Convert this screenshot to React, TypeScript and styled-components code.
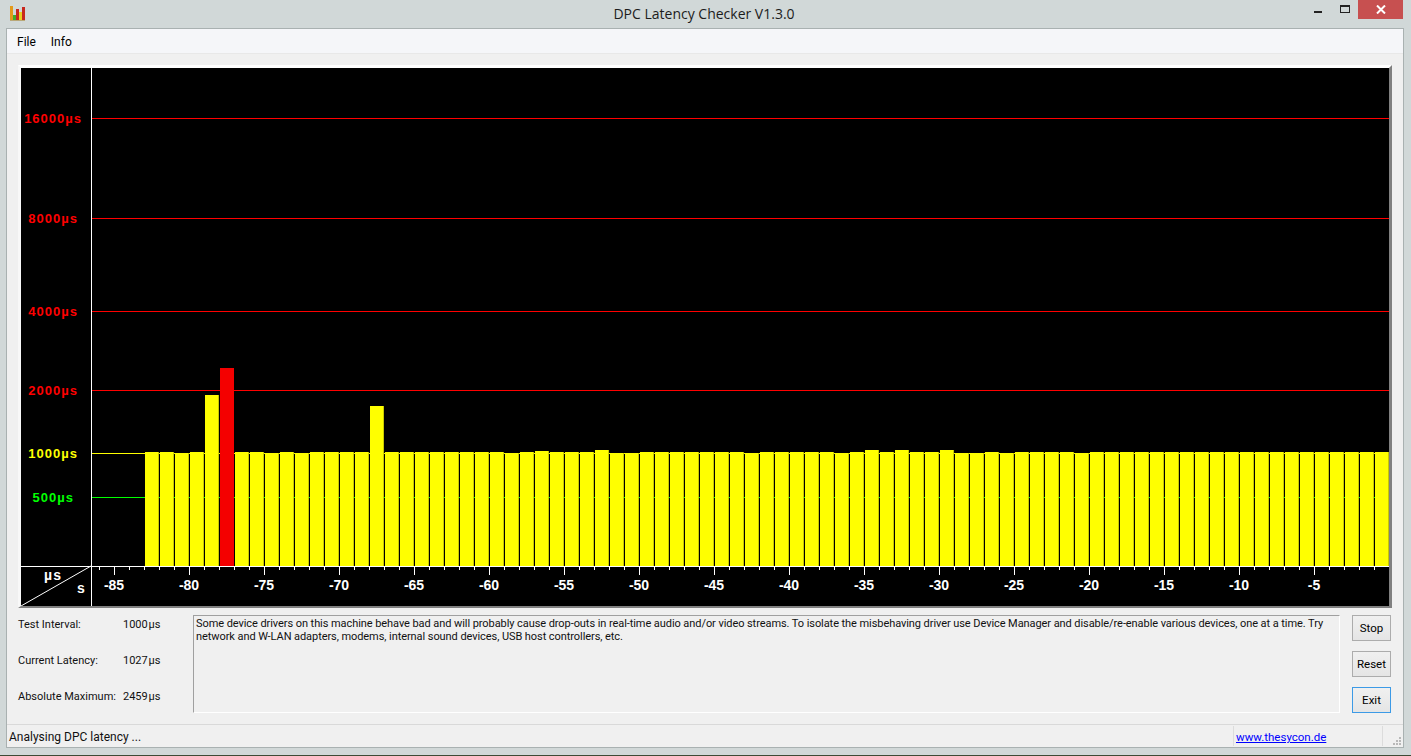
import * as React from 'react';
import styled, { createGlobalStyle } from 'styled-components';

const CHART_W = 1368;
const CHART_H = 538;
const AXIS_X = 70;
const BASE_Y = 498;
const FIRST_BAR = 124;
const BAR_PITCH = 15;

// top of each bar, in screen rows, left to right
const BAR_TOPS = [
  452, 452, 453, 452, 395, 368, 452, 452, 453, 452, 453, 452, 452, 452, 452, 406, 452, 452, 452, 452,
  452, 452, 452, 452, 453, 452, 451, 452, 452, 452, 450, 453, 453, 452, 452, 452, 452, 452, 452, 452,
  453, 452, 452, 452, 452, 452, 453, 452, 450, 452, 450, 452, 452, 450, 453, 453, 452, 453, 452, 452,
  452, 452, 453, 452, 452, 452, 452, 452, 452, 452, 452, 452, 452, 452, 452, 452, 452, 452, 452, 452,
  452, 452, 452,
];

const GRID = [
  { label: '16000µs', y: 50, color: '#ff0000', x: 61 },
  { label: '8000µs', y: 150, color: '#ff0000', x: 57 },
  { label: '4000µs', y: 243, color: '#ff0000', x: 57 },
  { label: '2000µs', y: 322, color: '#ff0000', x: 57 },
  { label: '1000µs', y: 385, color: '#ffff00', x: 57 },
  { label: '500µs', y: 429, color: '#00ff00', x: 53 },
];

const GlobalStyle = createGlobalStyle`
  html, body {
    margin: 0;
    padding: 0;
    background: #d1d8d8;
  }
  #root {
    width: 1411px;
    height: 756px;
    overflow: hidden;
  }
`;

const Window = styled.div`
  width: 1411px;
  height: 756px;
  display: flex;
  flex-direction: column;
  background: #d1d8d8;
  font-family: Roboto, 'Open Sans', sans-serif;
  color: #000;
`;

const TitleBar = styled.div`
  height: 28px;
  flex: none;
  display: grid;
  grid-template-columns: 1fr auto 1fr;
  align-items: start;
`;

const AppIcon = styled.svg`
  margin: 6px 0 0 10px;
  width: 16px;
  height: 16px;
`;

const Title = styled.div`
  font-family: 'Open Sans', sans-serif;
  font-size: 14px;
  line-height: 28px;
  color: #1c1c1c;
  margin-left: -3px;
`;

const WindowButtons = styled.div`
  justify-self: end;
  display: flex;
  align-items: flex-start;
  margin-right: 8px;
`;

const ChromeButton = styled.div<{ $close?: boolean }>`
  width: ${(p) => (p.$close ? '45px' : '27px')};
  height: 19px;
  background: ${(p) => (p.$close ? '#c75050' : 'transparent')};
  display: flex;
  align-items: center;
  justify-content: center;
`;

const Client = styled.div`
  width: 1398px;
  height: 720px;
  margin-left: 6px;
  flex: none;
  display: flex;
  flex-direction: column;
  background: #f0f0f0;
  border: 1px solid #a9b1b1;
  box-sizing: border-box;
`;

const MenuBar = styled.div`
  height: 22px;
  flex: none;
  display: flex;
  gap: 15px;
  align-items: center;
  padding: 2px 0 0 10px;
  background: #f5f6f9;
  border-bottom: 1px solid #e8e8e8;
  font-size: 12px;
`;

const ChartFrame = styled.div`
  margin: 11px 0 0 11px;
  width: ${CHART_W}px;
  height: ${CHART_H}px;
  flex: none;
  border: solid 3px;
  border-bottom-width: 2px;
  border-color: #fff #808080 #808080 #f8f8f8;
`;

const Chart = styled.svg`
  display: block;
  background: #000;
`;

const GridLabel = styled.text`
  font-family: 'Liberation Sans', sans-serif;
  font-size: 13px;
  font-weight: 700;
  letter-spacing: 1px;
  text-anchor: end;
`;

const AxisLabel = styled.text`
  font-family: 'Liberation Sans', sans-serif;
  font-size: 14px;
  font-weight: 700;
  fill: #fff;
  text-anchor: middle;
`;

const CornerLabel = styled(AxisLabel)`
  letter-spacing: 1px;
`;

const BottomPanel = styled.div`
  flex: 1;
  display: flex;
  min-height: 0;
  padding: 6px 12px 0 11px;
`;

const Stats = styled.div`
  width: 175px;
  flex: none;
  display: flex;
  flex-direction: column;
  gap: 18px;
  padding-top: 2px;
`;

const StatRow = styled.div`
  display: flex;
  font-size: 11px;
  line-height: 18px;
  color: #111;
  white-space: nowrap;
`;

const StatName = styled.span`
  width: 105px;
`;

const StatValue = styled.span`
  width: 37px;
  text-align: right;
  word-spacing: -2px;
`;

const Message = styled.div`
  flex: 1;
  min-width: 0;
  height: 98px;
  box-sizing: border-box;
  margin-top: 1px;
  padding: 1px 2px;
  border: 1px solid;
  border-color: #a0a0a0 #fff #fff #a0a0a0;
  font-size: 11px;
  letter-spacing: -0.07px;
  line-height: 13px;
  color: #111;
  white-space: nowrap;
`;

const ButtonColumn = styled.div`
  width: 39px;
  margin: 1px 0 0 12px;
  flex: none;
  display: flex;
  flex-direction: column;
  gap: 10px;
`;

const Button = styled.div<{ $focus?: boolean }>`
  height: 26px;
  box-sizing: border-box;
  display: flex;
  align-items: center;
  justify-content: center;
  font-size: 11.5px;
  background: linear-gradient(#f0f0f0, #e5e5e5);
  border: 1px solid ${(p) => (p.$focus ? '#3c9ae6' : '#acacac')};
`;

const StatusBar = styled.div`
  height: 23px;
  flex: none;
  box-sizing: border-box;
  display: flex;
  align-items: center;
  border-top: 1px solid #d9d9d9;
  font-size: 12px;
  color: #111;
`;

const StatusText = styled.div`
  flex: 1;
  padding: 2px 0 0 2px;
`;

const LinkCell = styled.div`
  width: 150px;
  height: 20px;
  display: flex;
  align-items: center;
  padding: 2px 0 0 2px;
  box-sizing: border-box;
  border-left: 1px solid #dcdcdc;
  border-right: 1px solid #dcdcdc;
`;

const Link = styled.a`
  color: #0000ff;
  text-decoration: underline;
  font-size: 11.5px;
`;

const Grip = styled.svg`
  width: 20px;
  height: 20px;
  flex: none;
`;

const BottomEdge = styled.div`
  flex: none;
  height: 1px;
  margin-top: auto;
  background: #3d4a35;
`;

const App: React.FC = () => {
  const ticks = Array.from({ length: 86 }, (_, i) => i);
  return (
    <Window>
      <GlobalStyle />
      <TitleBar>
        <AppIcon viewBox="0 0 16 16">
          <rect x="0" y="14" width="15" height="1" fill="#b9a878" />
          <rect x="0" y="0" width="3" height="14" fill="#e39a1a" />
          <rect x="3" y="9" width="3" height="5" fill="#3fae2a" />
          <rect x="6" y="3" width="3" height="11" fill="#c8281e" />
          <rect x="9" y="6" width="3" height="8" fill="#e8d020" />
          <rect x="12" y="1" width="3" height="13" fill="#c8281e" />
        </AppIcon>
        <Title>DPC Latency Checker V1.3.0</Title>
        <WindowButtons>
          <ChromeButton>
            <svg width="10" height="10" viewBox="0 0 10 10">
              <rect x="1" y="6" width="8" height="2" fill="#222" />
            </svg>
          </ChromeButton>
          <ChromeButton>
            <svg width="10" height="9" viewBox="0 0 10 9">
              <rect x="0.5" y="0.5" width="9" height="7" fill="none" stroke="#222" />
              <rect x="0" y="0" width="10" height="2" fill="#222" />
            </svg>
          </ChromeButton>
          <ChromeButton $close>
            <svg width="10" height="9" viewBox="0 0 10 9">
              <path d="M1 0.5 L9 8.5 M9 0.5 L1 8.5" stroke="#fff" strokeWidth="2" />
            </svg>
          </ChromeButton>
        </WindowButtons>
      </TitleBar>
      <Client>
        <MenuBar>
          <span>File</span>
          <span>Info</span>
        </MenuBar>
        <ChartFrame>
          <Chart width={CHART_W} height={CHART_H} viewBox={`0 0 ${CHART_W} ${CHART_H}`} shapeRendering="crispEdges">
            {GRID.map((g) => (
              <g key={g.label}>
                <rect x={AXIS_X} y={g.y} width={CHART_W - AXIS_X} height={1} fill={g.color} />
                <GridLabel x={g.x} y={g.y + 5} fill={g.color}>
                  {g.label}
                </GridLabel>
              </g>
            ))}
            {BAR_TOPS.map((top, i) => {
              const x = FIRST_BAR + i * BAR_PITCH;
              const y = top - 68;
              const isPeak = top === 368;
              return (
                <g key={x}>
                  <rect x={x} y={y} width={14} height={BASE_Y - y} fill={isPeak ? '#f40000' : '#ffff00'} />
                  <rect x={x + 13} y={y} width={1} height={BASE_Y - y} fill={isPeak ? '#f40000' : '#c8c800'} />
                </g>
              );
            })}
            <rect x={AXIS_X} y={0} width={1} height={CHART_H} fill="#fff" />
            <rect x={0} y={BASE_Y} width={CHART_W} height={1} fill="#fff" />
            <line x1={0} x2={AXIS_X} y1={CHART_H} y2={BASE_Y} stroke="#fff" shapeRendering="auto" />
            <CornerLabel x={32} y={512}>
              µs
            </CornerLabel>
            <AxisLabel x={60} y={525}>
              s
            </AxisLabel>
            {ticks.map((i) => {
              const x = 78 + i * BAR_PITCH;
              const major = (i + 4) % 5 === 0;
              return <rect key={x} x={x} y={BASE_Y} width={1} height={major ? 9 : 4} fill="#fff" />;
            })}
            {Array.from({ length: 17 }, (_, i) => 85 - i * 5).map((s) => (
              <AxisLabel key={s} x={93 + (85 - s) * BAR_PITCH} y={522}>
                {`-${s}`}
              </AxisLabel>
            ))}
          </Chart>
        </ChartFrame>
        <BottomPanel>
          <Stats>
            <StatRow>
              <StatName>Test Interval:</StatName>
              <StatValue>1000 µs</StatValue>
            </StatRow>
            <StatRow>
              <StatName>Current Latency:</StatName>
              <StatValue>1027 µs</StatValue>
            </StatRow>
            <StatRow>
              <StatName>Absolute Maximum:</StatName>
              <StatValue>2459 µs</StatValue>
            </StatRow>
          </Stats>
          <Message>
            Some device drivers on this machine behave bad and will probably cause drop-outs in real-time audio and/or
            video streams. To isolate the misbehaving driver use Device Manager and disable/re-enable various devices,
            one at a time. Try
            <br />
            network and W-LAN adapters, modems, internal sound devices, USB host controllers, etc.
          </Message>
          <ButtonColumn>
            <Button>Stop</Button>
            <Button>Reset</Button>
            <Button $focus>Exit</Button>
          </ButtonColumn>
        </BottomPanel>
        <StatusBar>
          <StatusText>Analysing DPC latency ...</StatusText>
          <LinkCell>
            <Link href="#">www.thesycon.de</Link>
          </LinkCell>
          <Grip viewBox="0 0 20 20">
            <g fill="#b8b8b8">
              <rect x="16" y="11" width="2" height="2" />
              <rect x="13" y="14" width="2" height="2" />
              <rect x="16" y="14" width="2" height="2" />
              <rect x="10" y="17" width="2" height="2" />
              <rect x="13" y="17" width="2" height="2" />
              <rect x="16" y="17" width="2" height="2" />
            </g>
          </Grip>
        </StatusBar>
      </Client>
      <BottomEdge />
    </Window>
  );
};

export default App;
